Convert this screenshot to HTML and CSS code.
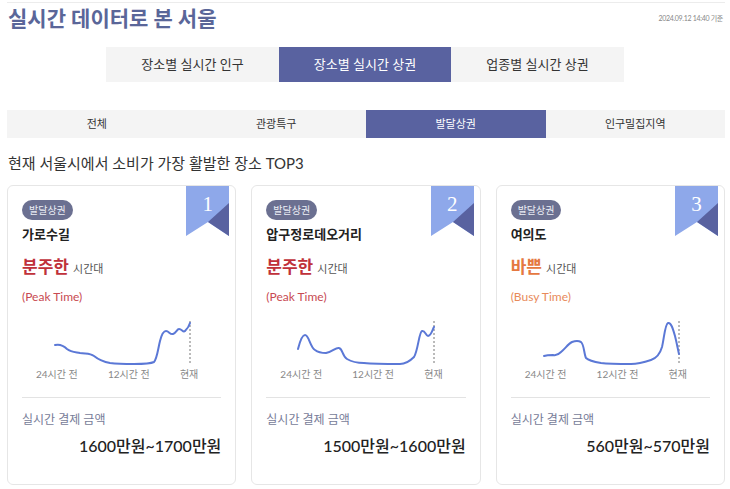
FILE: index.html
```html
<!DOCTYPE html>
<html lang="ko">
<head>
  <meta charset="UTF-8">
  <meta name="viewport" content="width=device-width, initial-scale=1.0">
  <title>실시간 데이터로 본 서울</title>
  <link rel="stylesheet" href="styles.css">
</head>
<body>

<div class="page">
  <header class="top">
    <h1 class="title">실시간 데이터로 본 서울</h1>
    <span class="stamp">2024.09.12 14:40 기준</span>
  </header>

  <!-- 큰 탭 -->
  <ul class="main-tabs">
    <li class="main-tab">장소별 실시간 인구</li>
    <li class="main-tab on">장소별 실시간 상권</li>
    <li class="main-tab">업종별 실시간 상권</li>
  </ul>

  <!-- 작은 탭 -->
  <ul class="sub-tabs">
    <li class="sub-tab">전체</li>
    <li class="sub-tab">관광특구</li>
    <li class="sub-tab on">발달상권</li>
    <li class="sub-tab">인구밀집지역</li>
  </ul>

  <h2 class="section-title">현재 서울시에서 소비가 가장 활발한 장소 TOP3</h2>

  <div class="cards">

    <div class="card">
      <div class="ribbon">
        <svg width="43" height="50" viewBox="0 0 43 50">
          <polygon points="0,0 43,0 43,50 22,36 0,50" fill="#8ea8ea"/>
          <polygon points="43,17 43,50 22,36" fill="#5962a0"/>
        </svg>
        <span class="rank">1</span>
      </div>
      <span class="badge">발달상권</span>
      <p class="place">가로수길</p>
      <p class="level"><strong class="busy-red">분주한</strong> <span class="level-sub">시간대</span></p>
      <p class="level-en red">(Peak Time)</p>
      <svg class="chart" width="199" height="48" viewBox="0 0 199 48">
        <line x1="168" y1="2" x2="168" y2="45" stroke="#777" stroke-width="1" stroke-dasharray="2,2"/>
        <path d="M33,26 C37,25 41,26 45,30 C49,33 53,33 58,34 C64,35 68,34 72,37 C77,41 82,43 88,44 C96,45 104,45 112,45 C120,45 128,45 132,43 C135,40 136,30 138,22 C140,14 142,12 144,12 C147,12 148,16 151,15 C154,14 155,10 157,10 C160,10 161,14 163,12 C165,10 167,8 168,4" fill="none" stroke="#5b78d6" stroke-width="2" stroke-linecap="round"/>
      </svg>
      <div class="axis">
        <span>24시간 전</span>
        <span>12시간 전</span>
        <span>현재</span>
      </div>
      <div class="pay">
        <p class="pay-label">실시간 결제 금액</p>
        <p class="pay-value">1600만원~1700만원</p>
      </div>
    </div>

    <div class="card">
      <div class="ribbon">
        <svg width="43" height="50" viewBox="0 0 43 50">
          <polygon points="0,0 43,0 43,50 22,36 0,50" fill="#8ea8ea"/>
          <polygon points="43,17 43,50 22,36" fill="#5962a0"/>
        </svg>
        <span class="rank">2</span>
      </div>
      <span class="badge">발달상권</span>
      <p class="place">압구정로데오거리</p>
      <p class="level"><strong class="busy-red">분주한</strong> <span class="level-sub">시간대</span></p>
      <p class="level-en red">(Peak Time)</p>
      <svg class="chart" width="199" height="48" viewBox="0 0 199 48">
        <line x1="168" y1="2" x2="168" y2="45" stroke="#777" stroke-width="1" stroke-dasharray="2,2"/>
        <path d="M32,30 C34,22 36,16 39,16 C43,16 44,28 49,31 C53,34 56,34 60,34 C66,33 70,28 73,29 C77,30 76,37 81,40 C86,43 92,44 98,44 C108,45 124,45 134,45 C140,45 144,42 148,38 C152,32 153,13 156,12 C159,11 160,17 162,17 C165,17 166,12 168,8" fill="none" stroke="#5b78d6" stroke-width="2" stroke-linecap="round"/>
      </svg>
      <div class="axis">
        <span>24시간 전</span>
        <span>12시간 전</span>
        <span>현재</span>
      </div>
      <div class="pay">
        <p class="pay-label">실시간 결제 금액</p>
        <p class="pay-value">1500만원~1600만원</p>
      </div>
    </div>

    <div class="card">
      <div class="ribbon">
        <svg width="43" height="50" viewBox="0 0 43 50">
          <polygon points="0,0 43,0 43,50 22,36 0,50" fill="#8ea8ea"/>
          <polygon points="43,17 43,50 22,36" fill="#5962a0"/>
        </svg>
        <span class="rank">3</span>
      </div>
      <span class="badge">발달상권</span>
      <p class="place">여의도</p>
      <p class="level"><strong class="busy-orange">바쁜</strong> <span class="level-sub">시간대</span></p>
      <p class="level-en orange">(Busy Time)</p>
      <svg class="chart" width="199" height="48" viewBox="0 0 199 48">
        <line x1="168" y1="2" x2="168" y2="45" stroke="#777" stroke-width="1" stroke-dasharray="2,2"/>
        <path d="M33,37 C36,36 39,36 42,36 C45,37 47,36 50,33 C54,30 57,25 61,23 C64,22 68,22 70,23 C73,25 73,35 75,39 C78,42 84,43 90,44 C98,45 110,45 120,45 C128,45 134,43 140,41 C146,39 149,35 151,28 C153,20 154,5 157,4 C160,3 162,10 164,17 C166,25 167,31 168,35" fill="none" stroke="#5b78d6" stroke-width="2" stroke-linecap="round"/>
      </svg>
      <div class="axis">
        <span>24시간 전</span>
        <span>12시간 전</span>
        <span>현재</span>
      </div>
      <div class="pay">
        <p class="pay-label">실시간 결제 금액</p>
        <p class="pay-value">560만원~570만원</p>
      </div>
    </div>

  </div>
</div>

</body>
</html>
```

FILE: styles.css
```css
body {
    margin: 0;
    font-family: "Lato", "Noto Sans CJK KR", sans-serif;
    color: #333;
    background-color: #fff;
}

p, h1, h2, ul {
    margin: 0;
    padding: 0;
}

ul {
    list-style: none;
}

.page {
    margin: 2px 5px 0 7px;
    border-top: 1px solid #ececec;
}

/* 제목 */
.top {
    height: 30px;
    display: flex;
    align-items: center;
    justify-content: space-between;
}

.title {
    font-size: 21px;
    font-weight: 700;
    line-height: 30px;
    color: #5a6699;
    margin-left: 1px;
}

.stamp {
    font-size: 7px;
    letter-spacing: -0.3px;
    color: #888;
    padding-right: 2px;
}

/* 큰 탭 */
.main-tabs {
    display: flex;
    justify-content: center;
    margin-top: 14px;
    margin-right: -5px;
    margin-left: -7px;
}

.main-tab {
    width: 172.5px;
    height: 35px;
    line-height: 35px;
    text-align: center;
    font-size: 13px;
    background-color: #f4f4f4;
    color: #333;
}

.main-tab.on {
    background-color: #5962a0;
    color: #fff;
}

/* 작은 탭 */
.sub-tabs {
    display: grid;
    grid-template-columns: repeat(4, 1fr);
    margin-top: 28px;
    background-color: #f4f4f4;
}

.sub-tab {
    height: 28px;
    line-height: 28px;
    text-align: center;
    font-size: 11px;
    color: #333;
}

.sub-tab.on {
    background-color: #5962a0;
    color: #fff;
}

.section-title {
    margin-top: 14px;
    font-size: 15px;
    font-weight: 400;
    line-height: 22px;
    color: #333;
    margin-left: 1px;
}

/* 카드 */
.cards {
    display: grid;
    grid-template-columns: repeat(3, 1fr);
    gap: 15px;
    margin-top: 11px;
}

.card {
    position: relative;
    border: 1px solid #e6e6e6;
    border-radius: 6px;
    padding: 14px 14px 26px 14px;
}

.ribbon {
    position: absolute;
    top: 0;
    right: 6px;
    width: 43px;
    height: 50px;
}

.ribbon svg {
    display: block;
}

.rank {
    position: absolute;
    top: 5px;
    left: 0;
    width: 43px;
    text-align: center;
    font-family: "Liberation Serif", serif;
    font-size: 21px;
    line-height: 26px;
    color: #fff;
}

.badge {
    display: block;
    width: max-content;
    height: 20px;
    line-height: 20px;
    padding: 0 7px;
    border-radius: 10px;
    background-color: #6b7091;
    color: #eceef5;
    font-size: 10px;
}

.place {
    margin-top: 5px;
    font-size: 13px;
    font-weight: 700;
    line-height: 18px;
    color: #222;
}

.level {
    margin-top: 12px;
    line-height: 24px;
}

.busy-red {
    font-size: 17px;
    color: #c0313a;
}

.busy-orange {
    font-size: 17px;
    color: #e57840;
}

.level-sub {
    font-size: 11px;
    color: #555;
}

.level-en {
    margin-top: 7px;
    font-size: 12px;
    line-height: 18px;
}

.red {
    color: #c84a52;
}

.orange {
    color: #e88a5a;
}

.chart {
    display: block;
    margin-top: 13px;
}

.axis {
    display: flex;
    justify-content: space-between;
    padding: 0 23px 0 14px;
    font-size: 10px;
    line-height: 14px;
    color: #888;
}

.pay {
    margin-top: 16px;
    border-top: 1px solid #e3e3e3;
    padding-top: 13px;
}

.pay-label {
    font-size: 12px;
    line-height: 18px;
    color: #777c98;
}

.pay-value {
    margin-top: 5px;
    text-align: right;
    font-size: 16px;
    font-weight: 500;
    line-height: 24px;
    color: #222;
}
```
